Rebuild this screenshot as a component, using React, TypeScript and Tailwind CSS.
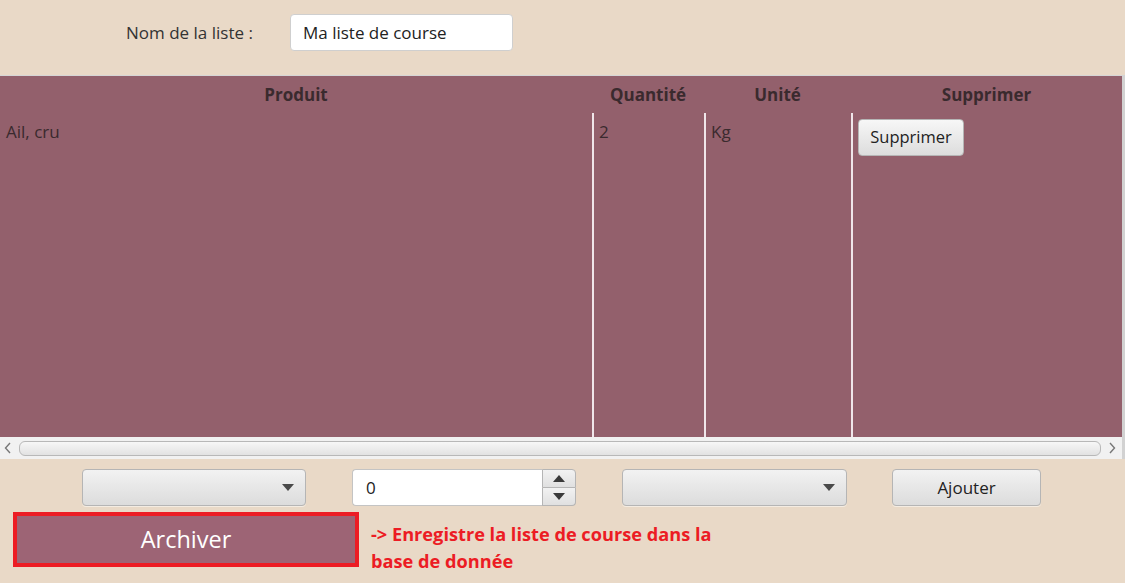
const FONT = "font-['Open_Sans',sans-serif]";

function Combo({ width }: { width: string }) {
  return (
    <div
      className={`${width} flex h-[37px] items-center justify-end rounded-[4px] border border-[#b5b5b5] bg-gradient-to-b from-[#f2f2f2] to-[#dcdcdc] pr-[11px] shadow-[0_1px_0_#f4ece2]`}
    >
      <svg width="12" height="7" viewBox="0 0 12 7">
        <path d="M0 0 H12 L6 7 Z" fill="#4a4a4a" />
      </svg>
    </div>
  );
}

function Spinner() {
  return (
    <div className="flex h-[37px] w-[224px]">
      <div className="flex flex-1 items-center rounded-l-[4px] border border-r-0 border-[#c4c4c4] bg-white pl-[13px] text-[17px] text-[#222]">
        0
      </div>
      <div className="flex w-[34px] flex-col">
        <div className="flex h-1/2 items-center justify-center rounded-tr-[4px] border border-[#b5b5b5] bg-gradient-to-b from-[#f2f2f2] to-[#e0e0e0]">
          <svg width="12" height="7" viewBox="0 0 12 7">
            <path d="M0 7 H12 L6 0 Z" fill="#3a3a3a" />
          </svg>
        </div>
        <div className="flex h-1/2 items-center justify-center rounded-br-[4px] border border-t-0 border-[#b5b5b5] bg-gradient-to-b from-[#f2f2f2] to-[#e0e0e0]">
          <svg width="12" height="7" viewBox="0 0 12 7">
            <path d="M0 0 H12 L6 7 Z" fill="#3a3a3a" />
          </svg>
        </div>
      </div>
    </div>
  );
}

export default function App() {
  return (
    <div className={`flex h-[583px] w-[1125px] flex-col bg-[#e9d9c7] ${FONT} text-[#333]`}>
      {/* list name */}
      <div className="flex h-[75px] items-start pl-[126px] pt-[14px]">
        <span className="flex h-[37px] w-[164px] items-center text-[17px] text-[#333]">Nom de la liste :</span>
        <div className="flex h-[37px] w-[223px] items-center rounded-[4px] border border-[#cfcfcf] bg-white pl-[12px] text-[17px] text-[#222]">
          Ma liste de course
        </div>
      </div>

      {/* table */}
      <div className="flex h-[384px] flex-col border-t border-[#d6d6d6] border-r-[3px] border-r-[#d2d2d2]">
        <div className="flex h-[37px] bg-[#93606c] text-[17px] font-bold text-[#3a2a2e]">
          <div className="flex w-[592px] items-center justify-center">Produit</div>
          <div className="flex w-[112px] items-center justify-center">Quantité</div>
          <div className="flex w-[147px] items-center justify-center">Unité</div>
          <div className="flex flex-1 items-center justify-center">Supprimer</div>
        </div>
        <div className="flex flex-1 bg-[#93606c] text-[17px] text-[#3a2a2e]">
          <div className="w-[592px] pl-[6px] pt-[6px]">Ail, cru</div>
          <div className="w-[112px] border-l-2 border-[#f0e6ea] pl-[5px] pt-[6px]">2</div>
          <div className="w-[147px] border-l-2 border-[#f0e6ea] pl-[5px] pt-[6px]">Kg</div>
          <div className="flex-1 border-l-2 border-[#f0e6ea] pl-[5px] pt-[6px]">
            <div className="flex h-[37px] w-[106px] items-center justify-center rounded-[4px] border border-[#b5b5b5] bg-gradient-to-b from-[#f7f7f7] to-[#dddddd] text-[16.5px] text-[#222]">
              Supprimer
            </div>
          </div>
        </div>
        <div className="flex h-[22px] items-center bg-[#f1f1f1] pl-[4px] pr-[6px]">
          <svg width="8" height="12" viewBox="0 0 8 12">
            <path d="M6 1 L1.5 6 L6 11" fill="none" stroke="#777" strokeWidth="1.4" />
          </svg>
          <div className="mx-[7px] h-[15px] flex-1 rounded-[6px] border border-[#b8b8b8] bg-gradient-to-b from-[#f7f7f7] to-[#e2e2e2]" />
          <svg width="8" height="12" viewBox="0 0 8 12">
            <path d="M2 1 L6.5 6 L2 11" fill="none" stroke="#777" strokeWidth="1.4" />
          </svg>
        </div>
      </div>

      {/* inputs row */}
      <div className="flex items-center pl-[82px] pt-[10px]">
        <Combo width="w-[224px]" />
        <div className="ml-[46px]">
          <Spinner />
        </div>
        <div className="ml-[46px]">
          <Combo width="w-[225px]" />
        </div>
        <div className="ml-[45px] flex h-[37px] w-[149px] items-center justify-center rounded-[4px] border border-[#b5b5b5] bg-gradient-to-b from-[#f2f2f2] to-[#dcdcdc] text-[17px] text-[#222] shadow-[0_1px_0_#f4ece2]">
          Ajouter
        </div>
      </div>

      {/* archive */}
      <div className="flex items-start pl-[13px] pt-[6px]">
        <div className="flex h-[55px] w-[346px] items-center justify-center border-[4px] border-[#ec1c24] bg-[#9d6475] text-[23.5px] text-white">
          Archiver
        </div>
        <div className="ml-[12px] pt-[9px] text-[18.2px] font-bold leading-[27px] text-[#ec1c24]">
          -&gt; Enregistre la liste de course dans la
          <br />
          base de donnée
        </div>
      </div>
    </div>
  );
}
